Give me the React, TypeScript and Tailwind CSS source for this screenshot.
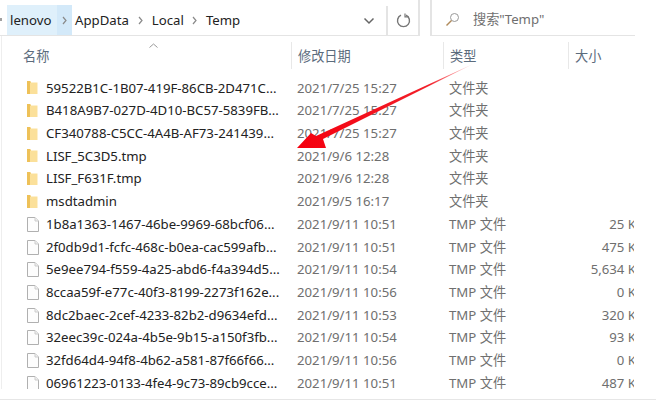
import React from 'react';

const folders = [
  ['59522B1C-1B07-419F-86CB-2D471C...', '2021/7/25 15:27'],
  ['B418A9B7-027D-4D10-BC57-5839FB...', '2021/7/25 15:27'],
  ['CF340788-C5CC-4A4B-AF73-241439...', '2021/7/25 15:27'],
  ['LISF_5C3D5.tmp', '2021/9/6 12:28'],
  ['LISF_F631F.tmp', '2021/9/6 12:28'],
  ['msdtadmin', '2021/9/5 16:17'],
];

const files = [
  ['1b8a1363-1467-46be-9969-68bcf06...', '2021/9/11 10:51', '25 K'],
  ['2f0db9d1-fcfc-468c-b0ea-cac599afb...', '2021/9/11 10:51', '475 K'],
  ['5e9ee794-f559-4a25-abd6-f4a394d5...', '2021/9/11 10:54', '5,634 K'],
  ['8ccaa59f-e77c-40f3-8199-2273f162e...', '2021/9/11 10:56', '0 K'],
  ['8dc2baec-2cef-4233-82b2-d9634efd...', '2021/9/11 10:53', '320 K'],
  ['32eec39c-024a-4b5e-9b15-a150f3fb...', '2021/9/11 10:54', '93 K'],
  ['32fd64d4-94f8-4b62-a581-87f66f66...', '2021/9/11 10:56', '0 K'],
  ['06961223-0133-4fe4-9c73-89cb9cce...', '2021/9/11 10:51', '487 K'],
];

const FolderIcon = () => (
  <svg width="11" height="14" viewBox="0 0 11 14" className="shrink-0">
    <path d="M0 0h3l1 1v12H0z" fill="#eec158" />
    <path d="M3 1.5h7.5V13H3z" fill="#fbe09a" />
  </svg>
);

const FileIcon = () => (
  <svg width="12" height="15" viewBox="0 0 12 15" className="shrink-0">
    <path d="M.5 .5h7.5l3.5 3.5v10.500H.5z" fill="#fdfdfd" stroke="#b0b0b0" />
    <path d="M8 .5v3.500h3.500" fill="#f0f0f0" stroke="#cccccc" />
  </svg>
);

const Chevron = () => (
  <svg width="7" height="9" viewBox="0 0 7 9" className="shrink-0">
    <path d="M2 1l3 3.5L2 8" fill="none" stroke="#8a8a8a" strokeWidth="1.2" />
  </svg>
);

const Row = ({ icon, name, date, type, size }: { icon: React.ReactNode; name: string; date: string; type: string; size?: string }) => (
  <div className="flex items-center w-[607px] h-[22.7px] overflow-hidden text-[13.2px] leading-none whitespace-nowrap">
    <div className="w-[19px] shrink-0 flex justify-start">{icon}</div>
    <div className="w-[251px] shrink-0 text-[#222222]">{name}</div>
    <div className="w-[152px] shrink-0 text-[#6f6f6f]">{date}</div>
    <div className="w-[107px] shrink-0 text-[#6f6f6f]">{type}</div>
    <div className="w-[80px] shrink-0 text-right text-[#6f6f6f]">{size}</div>
  </div>
);

export default function App() {
  return (
    <div
      className="relative w-[656px] h-[402px] overflow-hidden bg-white"
      style={{ fontFamily: '"Noto Sans", "Noto Sans CJK SC", sans-serif' }}
    >
      {/* 地址栏 */}
      <div className="flex h-[36px] items-start">
        <div className="flex w-[420px] h-[36px] border-b border-r-2 border-[#e4e4e4]">
          <div className="w-[2px] h-[3px] mt-[18px] mr-[5px] bg-[#a0a0a0]" />
          <div className="flex h-[30px] mt-[5px] w-[65px] bg-[#dff0fb] text-[#222222] text-[13.2px]">
            <span className="pl-[3px] pt-[1px] w-[50px] flex items-center">lenovo</span>
            <span className="flex flex-1 items-center justify-center bg-[#d3e9f9]"><Chevron /></span>
          </div>
          <div className="flex items-center h-[30px] mt-[5px] pt-[1px] text-[13.2px] text-[#222222] pl-[3px] flex-1">
            <span>AppData</span>
            <span className="mx-[8px]"><Chevron /></span>
            <span>Local</span>
            <span className="mx-[7.5px]"><Chevron /></span>
            <span>Temp</span>
            <svg width="12" height="8" viewBox="0 0 12 8" className="ml-auto mr-[11px]">
              <path d="M1.500 1.500L6 6l4.500-4.500" fill="none" stroke="#666666" strokeWidth="1.500" />
            </svg>
            <div className="h-[30px] w-[32px] border-l-2 border-[#e4e4e4] flex items-center justify-center">
              <svg width="15" height="15" viewBox="0 0 15 15">
                <path d="M10 2.200a6 6 0 1 1-5 0" fill="none" stroke="#777777" strokeWidth="1.400" />
                <path d="M9 .5v3.400h3.400" fill="none" stroke="#777777" strokeWidth="1.200" />
              </svg>
            </div>
          </div>
        </div>
        <div className="flex items-center w-[205px] h-[36px] ml-[10px] border-b border-l-2 border-[#e4e4e4] pt-[4px] pl-[13px] text-[13.2px] text-[#6f6f6f]">
          <svg width="15" height="15" viewBox="0 0 15 15" className="shrink-0">
            <circle cx="9.500" cy="5.500" r="4" fill="none" stroke="#999999" />
            <path d="M6.500 8.500L1.500 13.500" stroke="#b08a5a" strokeWidth="1.400" />
          </svg>
          <span className="ml-[13px]">搜索"Temp"</span>
        </div>
      </div>

      {/* 列表 */}
      <div className="ml-[1px] border-l border-[#eeeeee] pl-[25px]">
        <div className="relative -ml-[4px] flex h-[41px] text-[13.2px] text-[#5b6b7c] leading-none">
          <div className="w-[268px] pt-[14px]">名称</div>
          <div className="w-[152px] mt-[6px] pt-[8px] border-l border-[#e8e8e8] pl-[6px] h-[27px]">修改日期</div>
          <div className="w-[125px] mt-[6px] pt-[8px] border-l border-[#e8e8e8] pl-[6px] h-[27px]">类型</div>
          <div className="mt-[6px] pt-[8px] border-l border-[#e8e8e8] pl-[6px] h-[27px]">大小</div>
          <svg width="9" height="5" viewBox="0 0 9 5" className="absolute left-[126px] top-[7px]">
            <path d="M.5 4.500L4.500 1l4 3.500" fill="none" stroke="#999999" />
          </svg>
        </div>
        <div className="h-[312px] overflow-hidden">
          {folders.map(([name, date]) => (
            <Row key={name} icon={<FolderIcon />} name={name} date={date} type="文件夹" />
          ))}
          {files.map(([name, date, size]) => (
            <Row key={name} icon={<FileIcon />} name={name} date={date} type="TMP 文件" size={size} />
          ))}
        </div>
      </div>
      <div className="h-[1px] mt-[10px] bg-[#e6e6e6]" />

      {/* 红色箭头 */}
      <svg width="656" height="402" viewBox="0 0 656 402" className="absolute inset-0 pointer-events-none">
        <defs>
          <linearGradient id="arrow" x1="472" y1="64" x2="300" y2="146" gradientUnits="userSpaceOnUse">
            <stop offset="0" stopColor="#ffd5d5" />
            <stop offset="0.25" stopColor="#f2202a" />
            <stop offset="1" stopColor="#f5000f" />
          </linearGradient>
        </defs>
        <path d="M473 64L323 139L326 148L297 148L311 133L316 136Z" fill="url(#arrow)" />
      </svg>
    </div>
  );
}
